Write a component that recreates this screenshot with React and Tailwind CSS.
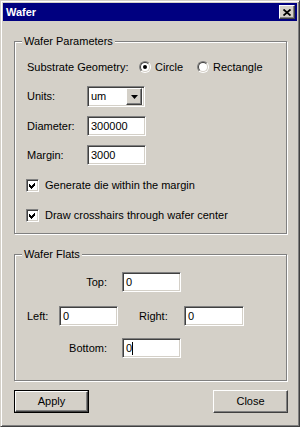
const sunken =
  "border border-t-[#808080] border-l-[#808080] border-r-white border-b-white shadow-[inset_1px_1px_0_#404040,inset_-1px_-1px_0_#d4d0c8]";
const raised =
  "border border-t-white border-l-white border-r-[#404040] border-b-[#404040] shadow-[inset_-1px_-1px_0_#808080,inset_1px_1px_0_#d4d0c8]";

function Field({ value, className, caret }) {
  return (
    <div className={`flex h-[20px] items-center bg-white pl-[3px] ${sunken} ${className}`}>
      <span>{value}</span>
      {caret ? <span className="h-[13px] w-px bg-black" /> : null}
    </div>
  );
}

function Radio({ checked, label, className }) {
  return (
    <div className={`flex items-center gap-[4px] ${className}`}>
      <div className="flex h-[12px] w-[12px] items-center justify-center rounded-full border border-t-[#808080] border-l-[#808080] border-r-white border-b-white">
        <div className="flex h-[10px] w-[10px] items-center justify-center rounded-full border border-t-[#404040] border-l-[#404040] border-r-[#d4d0c8] border-b-[#d4d0c8] bg-white">
          {checked ? <div className="h-[4px] w-[4px] rounded-full bg-black" /> : null}
        </div>
      </div>
      <span>{label}</span>
    </div>
  );
}

function Checkbox({ label, className }) {
  return (
    <div className={`flex h-[13px] items-center gap-[6px] ${className}`}>
      <div className={`relative h-[13px] w-[13px] bg-white ${sunken}`}>
        <svg width="13" height="13" viewBox="0 0 13 13" className="absolute -left-px -top-px" shapeRendering="crispEdges">
          <polygon points="3,5 5,7 9,3 9,6 5,10 3,8" fill="#000" />
        </svg>
      </div>
      <span>{label}</span>
    </div>
  );
}

function GroupBox({ label, className, children }) {
  return (
    <div className={`relative border border-[#808080] shadow-[inset_1px_1px_0_#fff,1px_1px_0_#fff] ${className}`}>
      <span className="absolute -top-[7px] left-[7px] bg-[#d4d0c8] px-[2px] leading-[13px]">{label}</span>
      {children}
    </div>
  );
}

export default function App() {
  return (
    <div className="h-[428px] w-[303px] bg-white font-['Liberation_Sans',Arial,sans-serif] text-[11px] leading-[13px] text-black">
      <div className="flex h-[427px] w-[300px] flex-col border border-t-[#d4d0c8] border-l-[#d4d0c8] border-r-[#404040] border-b-[#404040] bg-[#d4d0c8] p-[2px] shadow-[inset_1px_1px_0_#fff,inset_-1px_-1px_0_#808080]">
        <div className="flex h-[18px] items-center justify-between bg-[#000080] pl-[3px] pr-[2px]">
          <span className="font-bold text-white">Wafer</span>
          <div className={`flex h-[14px] w-[16px] items-center justify-center bg-[#d4d0c8] ${raised}`}>
            <svg width="8" height="7" viewBox="0 0 8 7">
              <path d="M0.5 0.5 L7.5 6.5 M7.5 0.5 L0.5 6.5" stroke="#000" strokeWidth="1.8" />
            </svg>
          </div>
        </div>

        <GroupBox label="Wafer Parameters" className="ml-[11px] mt-[20px] h-[193px] w-[273px]">
          <div className="mt-[15px] flex h-[20px] items-center pl-[12px]">
            <span className="w-[112px]">Substrate Geometry:</span>
            <Radio checked label="Circle" className="w-[58px]" />
            <Radio label="Rectangle" />
          </div>

          <div className="mt-[9px] flex h-[21px] items-center pl-[12px]">
            <span className="w-[60px]">Units:</span>
            <div className={`flex h-[21px] w-[58px] items-center justify-between bg-white p-[2px] pl-[3px] ${sunken}`}>
              <span>um</span>
              <div className={`flex h-[17px] w-[16px] items-center justify-center bg-[#d4d0c8] ${raised}`}>
                <svg width="7" height="4" viewBox="0 0 7 4">
                  <polygon points="0,0 7,0 3.5,4" fill="#000" />
                </svg>
              </div>
            </div>
          </div>

          <div className="mt-[9px] flex h-[20px] items-center pl-[12px]">
            <span className="w-[60px]">Diameter:</span>
            <Field value="300000" className="w-[59px]" />
          </div>

          <div className="mt-[9px] flex h-[20px] items-center pl-[12px]">
            <span className="w-[60px]">Margin:</span>
            <Field value="3000" className="w-[59px]" />
          </div>

          <Checkbox label="Generate die within the margin" className="mt-[14px] pl-[11px]" />
          <Checkbox label="Draw crosshairs through wafer center" className="mt-[17px] pl-[11px]" />
        </GroupBox>

        <GroupBox label="Wafer Flats" className="ml-[11px] mt-[20px] h-[127px] w-[273px]">
          <div className="mt-[17px] flex h-[20px] items-center">
            <span className="w-[92px] text-right">Top:</span>
            <Field value="0" className="ml-[15px] w-[59px]" />
          </div>

          <div className="mt-[14px] flex h-[20px] items-center pl-[12px]">
            <span className="w-[32px]">Left:</span>
            <Field value="0" className="w-[59px]" />
            <span className="ml-[21px] w-[45px]">Right:</span>
            <Field value="0" className="w-[60px]" />
          </div>

          <div className="mt-[12px] flex h-[20px] items-center">
            <span className="w-[92px] text-right">Bottom:</span>
            <Field value="0" caret className="ml-[15px] w-[59px]" />
          </div>
        </GroupBox>

        <div className="ml-[11px] mt-[9px] flex w-[274px] justify-between">
          <div className="h-[23px] w-[75px] border border-black">
            <div className={`flex h-full w-full items-center justify-center bg-[#d4d0c8] ${raised}`}>Apply</div>
          </div>
          <div className={`flex h-[23px] w-[75px] items-center justify-center bg-[#d4d0c8] ${raised}`}>Close</div>
        </div>
      </div>
    </div>
  );
}
